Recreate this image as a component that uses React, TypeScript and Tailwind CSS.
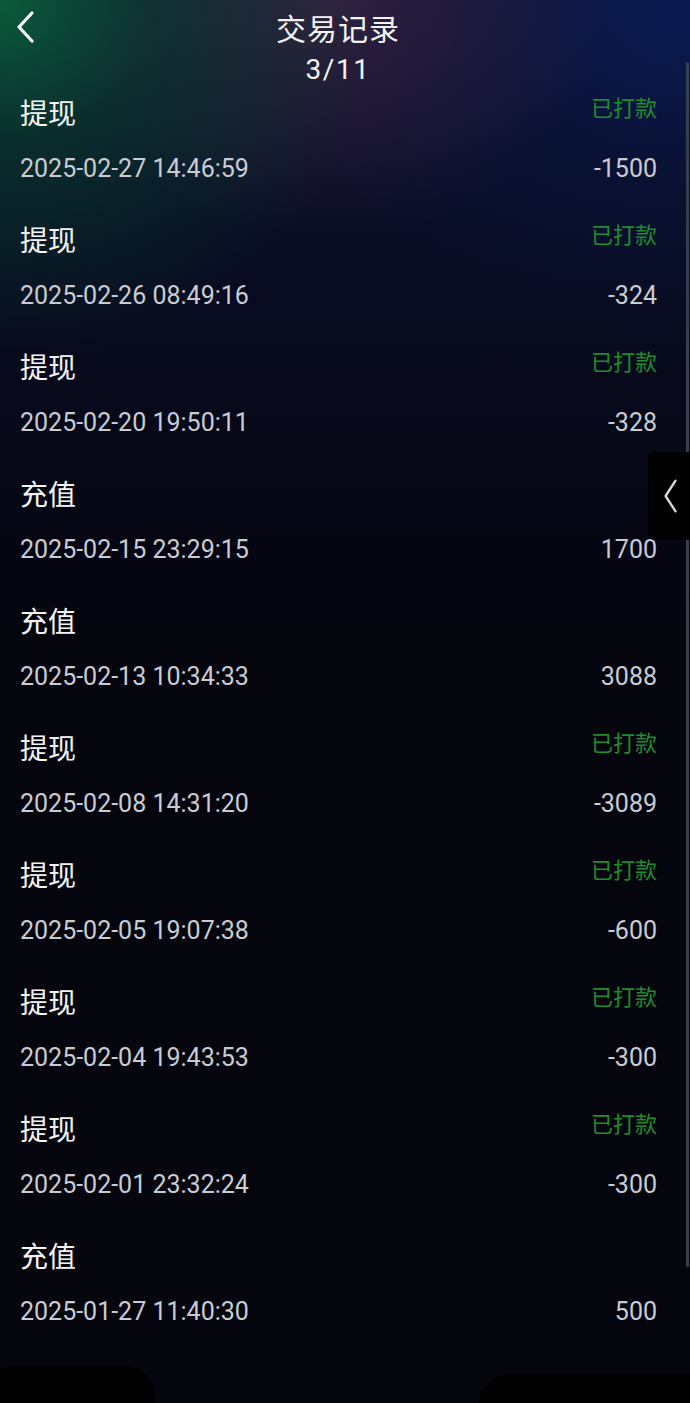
const records = [
  { type: '提现', status: '已打款', time: '2025-02-27 14:46:59', amount: '-1500' },
  { type: '提现', status: '已打款', time: '2025-02-26 08:49:16', amount: '-324' },
  { type: '提现', status: '已打款', time: '2025-02-20 19:50:11', amount: '-328' },
  { type: '充值', status: '', time: '2025-02-15 23:29:15', amount: '1700' },
  { type: '充值', status: '', time: '2025-02-13 10:34:33', amount: '3088' },
  { type: '提现', status: '已打款', time: '2025-02-08 14:31:20', amount: '-3089' },
  { type: '提现', status: '已打款', time: '2025-02-05 19:07:38', amount: '-600' },
  { type: '提现', status: '已打款', time: '2025-02-04 19:43:53', amount: '-300' },
  { type: '提现', status: '已打款', time: '2025-02-01 23:32:24', amount: '-300' },
  { type: '充值', status: '', time: '2025-01-27 11:40:30', amount: '500' },
]

export default function App() {
  return (
    <div
      className="relative w-[690px] h-[1403px] overflow-hidden bg-[#05050e] bg-[radial-gradient(ellipse_380px_360px_at_0px_0px,#0b5a3b_0%,rgba(10,70,48,0.55)_40%,transparent_100%),radial-gradient(ellipse_280px_240px_at_330px_0px,rgba(75,40,70,0.6)_0%,transparent_100%),radial-gradient(ellipse_420px_340px_at_690px_0px,#0a1a52_0%,rgba(10,22,70,0.45)_50%,transparent_100%),linear-gradient(180deg,#0b1230_0%,#080a1d_25%,#05050e_45%)]"
      style={{ fontFamily: 'Roboto, "Noto Sans CJK SC", sans-serif' }}
    >
      {/* header */}
      <header className="relative h-[90px] flex flex-col items-center pr-[14px] text-white">
        <button className="absolute left-[14px] top-[10px] w-[24px] h-[34px]">
          <svg viewBox="0 0 24 34" className="w-full h-full" fill="none" stroke="#ffffff" strokeWidth="3.2" strokeLinecap="round" strokeLinejoin="round">
            <path d="M18 3 L5 17 L18 31" />
          </svg>
        </button>
        <h1 className="mt-[11px] text-[30px] leading-[38px] tracking-[1px] text-[#f2f2f2]">交易记录</h1>
        <div className="mt-[3px] text-[28px] leading-[36px] tracking-[1.5px] text-[#f2f2f2]">3/11</div>
      </header>

      {/* list */}
      <ul>
        {records.map((r, i) => (
          <li key={i} className="h-[127px] pl-[20px] pr-[33px]">
            <div className="flex justify-between items-start h-[50px]">
              <span className="text-[28px] leading-[50px] text-[#f4f4f4]">{r.type}</span>
              {r.status && <span className="mt-[4px] text-[22px] leading-[30px] text-[#1f8c2d]">{r.status}</span>}
            </div>
            <div className="flex justify-between items-center h-[57px] text-[25px] text-[#c9ccd3]">
              <span>{r.time}</span>
              <span>{r.amount}</span>
            </div>
          </li>
        ))}
      </ul>

      {/* scrollbar */}
      <div className="absolute right-[1px] top-[62px] w-[3px] h-[1205px] rounded-full bg-[#3a3e4a]" />

      {/* side tab */}
      <div className="absolute right-0 top-[452px] w-[42px] h-[88px] bg-black rounded-l-[6px] flex items-center justify-center">
        <svg viewBox="0 0 20 38" className="w-[18px] h-[36px] ml-[4px]" fill="none" stroke="#d8d8d8" strokeWidth="2.6" strokeLinecap="round" strokeLinejoin="round">
          <path d="M15 2 L4 19 L15 36" />
        </svg>
      </div>

      {/* bottom covers */}
      <div className="absolute left-[-20px] top-[1366px] w-[175px] h-[70px] rounded-[32px] bg-black" />
      <div className="absolute left-[478px] top-[1374px] w-[240px] h-[70px] rounded-[34px] bg-black" />
    </div>
  )
}
